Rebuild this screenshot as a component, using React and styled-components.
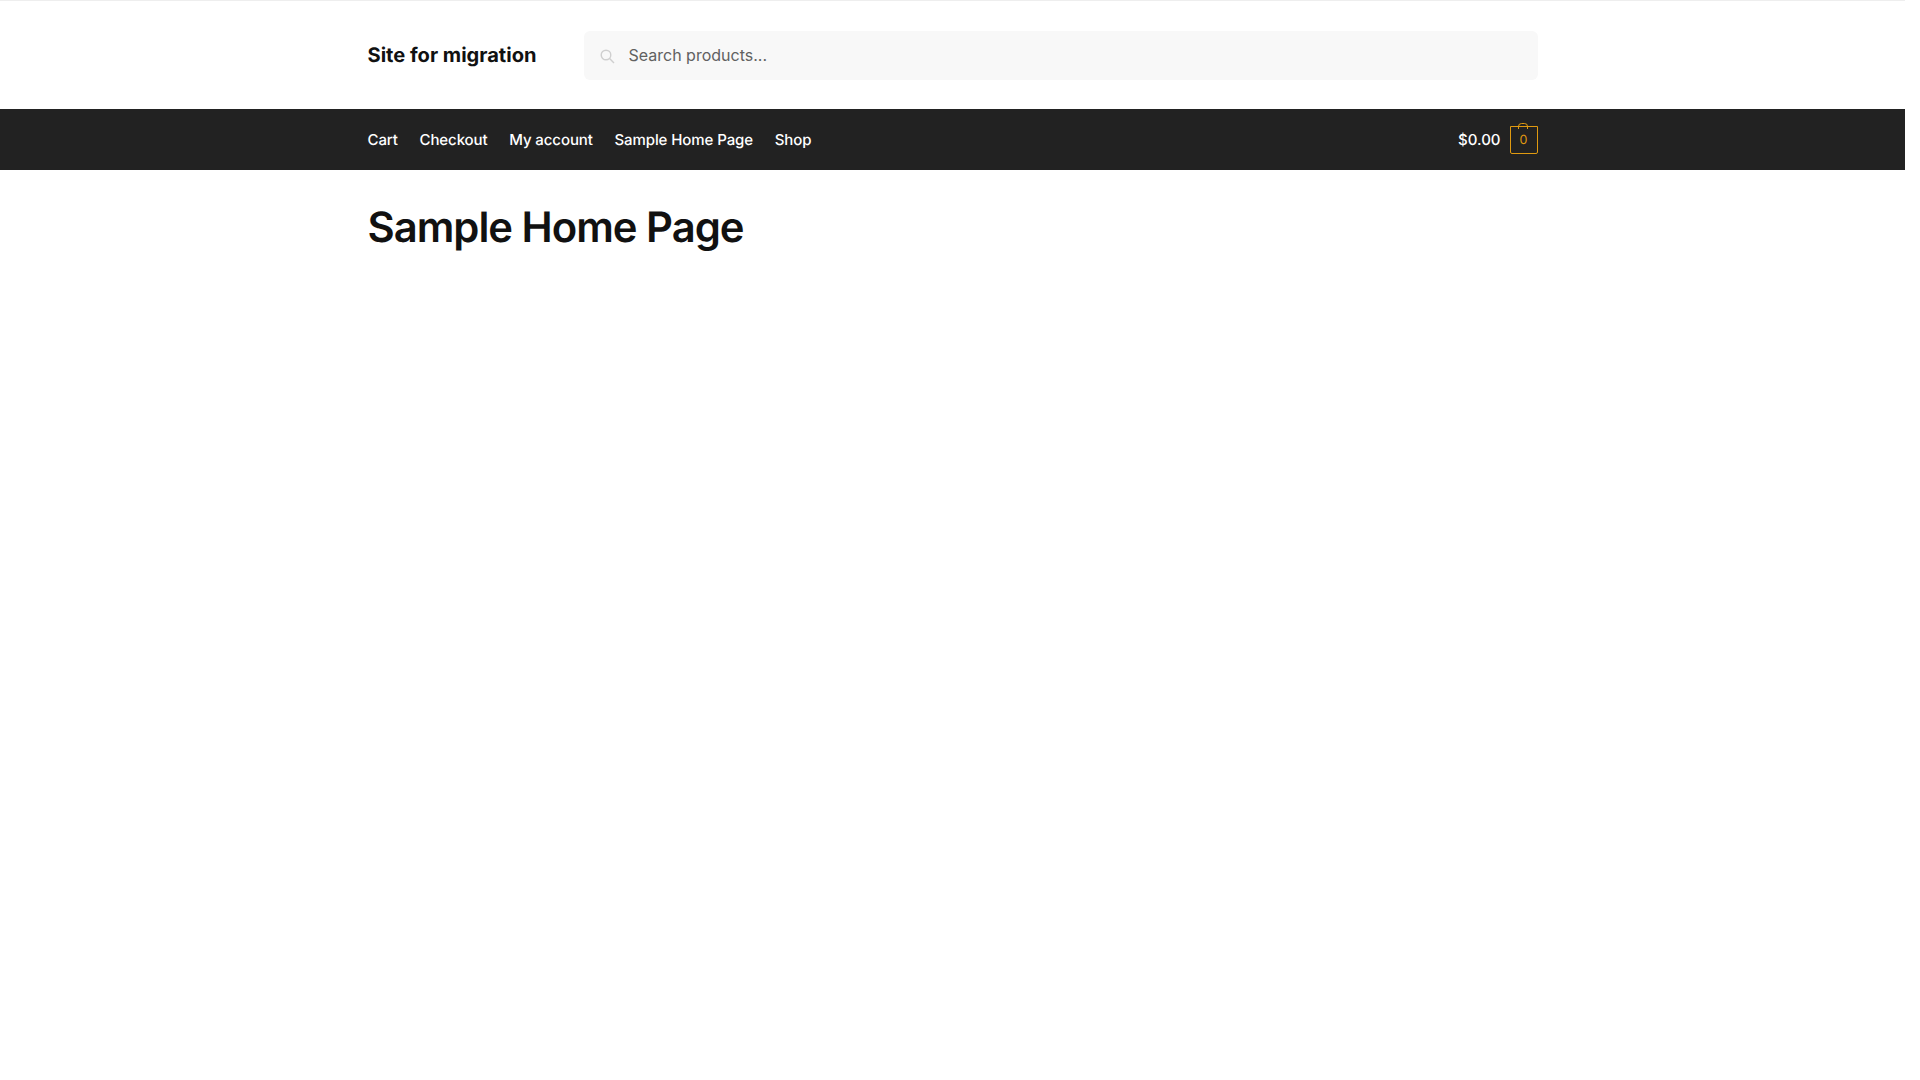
import React from 'react';
import styled, { createGlobalStyle } from 'styled-components';

const GlobalStyle = createGlobalStyle`
  body {
    margin: 0;
    background: #ffffff;
    font-family: Inter, "Noto Sans", sans-serif;
    color: #111111;
    text-rendering: geometricPrecision;
  }

  * {
    box-sizing: border-box;
  }
`;

const menuItems = ['Cart', 'Checkout', 'My account', 'Sample Home Page', 'Shop'];

const PageWrap = styled.div`
  width: 1905px;
  min-height: 1072px;
  border-top: 1px solid #eeeeee;
`;

const Container = styled.div`
  width: 1170px;
  height: ${props => props.fill ? '100%' : 'auto'};
  margin: 0 auto;
  display: flex;
  align-items: center;
  justify-content: ${props => props.between ? 'space-between' : 'flex-start'};
`;

const TopHeader = styled.header`
  height: 108px;
  padding-top: 30px;
`;

const SiteTitle = styled.div`
  width: 216px;
  font-size: 20.1px;
  font-weight: 700;
  color: #111111;
  margin-top: -2px;
`;

const SearchForm = styled.form`
  position: relative;
  flex: 1;
`;

const SearchIcon = styled.svg`
  position: absolute;
  left: 16px;
  top: 18px;
  width: 15px;
  height: 15px;
  fill: none;
  stroke: #cfcfcf;
  stroke-width: 1.4;
`;

const SearchInput = styled.input`
  display: block;
  width: 100%;
  height: 49px;
  padding: 0 16px 2px 45px;
  border: none;
  border-radius: 6px;
  background: #f8f8f8;
  font-family: inherit;
  font-size: 16px;
  color: #555555;
  outline: none;

  &::placeholder {
    color: #616161;
    opacity: 1;
  }
`;

const NavBar = styled.nav`
  height: 61px;
  background: #222222;
`;

const NavList = styled.div`
  display: flex;
  align-items: center;
  gap: 21.7px;
`;

const NavItem = styled.a`
  font-size: 15px;
  font-weight: 550;
  letter-spacing: -0.09px;
  color: #ffffff;
  cursor: pointer;
`;

const CartLink = styled.a`
  display: flex;
  align-items: center;
  gap: 9px;
  font-size: 15px;
  font-weight: 550;
  color: #ffffff;
  cursor: pointer;
`;

const CartCount = styled.span`
  position: relative;
  display: flex;
  align-items: center;
  justify-content: center;
  width: 28px;
  height: 28px;
  padding-top: 2px;
  border: 1px solid #e09a10;
  border-radius: 0 0 2px 2px;
  font-size: 12.5px;
  font-weight: 400;
  color: #e09a10;
`;

const BagHandle = styled.svg`
  position: absolute;
  left: 7.5px;
  top: -4px;
  width: 10px;
  height: 6px;
  fill: none;
  stroke: #e09a10;
  stroke-width: 1;
`;

const Main = styled.main`
  padding-top: 32.5px;
`;

const PageTitle = styled.h1`
  margin: 0;
  font-size: 41.8px;
  line-height: 1.214;
  font-weight: 600;
  letter-spacing: -1px;
  color: #111111;
`;

export default function App() {
  return (
    <PageWrap>
      <GlobalStyle />
      <TopHeader>
        <Container>
          <SiteTitle>Site for migration</SiteTitle>
          <SearchForm>
            <SearchIcon viewBox="0 0 15 15">
              <circle cx="6" cy="6" r="4.8" />
              <path d="M9.6 9.6L14 14" />
            </SearchIcon>
            <SearchInput type="search" placeholder="Search products..." />
          </SearchForm>
        </Container>
      </TopHeader>
      <NavBar>
        <Container between fill>
          <NavList>
            {menuItems.map((item) => (
              <NavItem key={item}>{item}</NavItem>
            ))}
          </NavList>
          <CartLink>
            $0.00
            <CartCount>
              <BagHandle viewBox="0 0 10 6">
                <path d="M.5 6V3.5A3 3 0 0 1 3.5.5h3a3 3 0 0 1 3 3V6" />
              </BagHandle>
              0
            </CartCount>
          </CartLink>
        </Container>
      </NavBar>
      <Main>
        <Container>
          <PageTitle>Sample Home Page</PageTitle>
        </Container>
      </Main>
    </PageWrap>
  );
}
